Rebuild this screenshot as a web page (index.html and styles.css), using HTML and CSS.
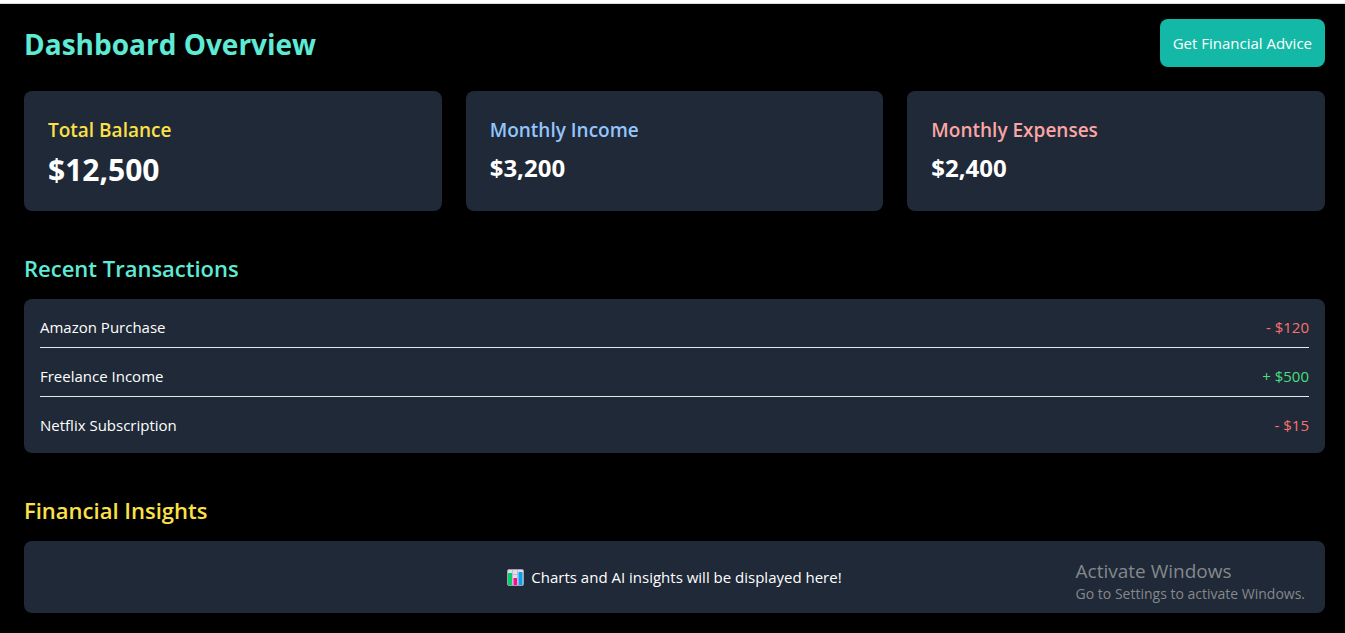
FILE: index.html
```html
<!DOCTYPE html>
<html lang="en">
<head>
  <meta charset="utf-8">
  <meta name="viewport" content="width=device-width, initial-scale=1">
  <title>Dashboard Overview</title>
  <link rel="stylesheet" href="styles.css">
</head>
<body>
  <main class="dashboard">
    <header class="dashboard-header">
      <h1 class="page-title">Dashboard Overview</h1>
      <button class="advice-button" type="button">Get Financial Advice</button>
    </header>

    <section class="summary" aria-label="Summary">
      <article class="card">
        <h2 class="card-title yellow">Total Balance</h2>
        <p class="amount amount-large">$12,500</p>
      </article>
      <article class="card">
        <h2 class="card-title blue">Monthly Income</h2>
        <p class="amount">$3,200</p>
      </article>
      <article class="card">
        <h2 class="card-title red">Monthly Expenses</h2>
        <p class="amount">$2,400</p>
      </article>
    </section>

    <section class="section">
      <h2 class="section-title teal">Recent Transactions</h2>
      <ul class="transactions">
        <li class="transaction"><span>Amazon Purchase</span><span class="debit">- $120</span></li>
        <li class="transaction"><span>Freelance Income</span><span class="credit">+ $500</span></li>
        <li class="transaction"><span>Netflix Subscription</span><span class="debit">- $15</span></li>
      </ul>
    </section>

    <section class="section">
      <h2 class="section-title yellow">Financial Insights</h2>
      <div class="insights">
        <svg class="chart-icon" viewBox="0 0 17 17" aria-hidden="true">
          <rect x="0.5" y="0.5" width="16" height="16" rx="1.5" fill="#e3dcec" stroke="#a79bb5"/>
          <path d="M1 5.5h15M1 10.5h15M5.5 1v15M10.5 1v15" stroke="#c3b7cf" fill="none"/>
          <path d="M1 4h4v12H1z" fill="#00cf63"/>
          <path d="M6.5 9h3.5v7H6.5z" fill="#f70a8d"/>
          <path d="M11.5 3h4v13h-4z" fill="#00a6ed"/>
        </svg>
        <p class="insights-text">Charts and AI insights will be displayed here!</p>
      </div>
    </section>
  </main>

  <aside class="watermark">
    <p class="watermark-title">Activate Windows</p>
    <p class="watermark-text">Go to Settings to activate Windows.</p>
  </aside>
</body>
</html>
```
FILE: styles.css
```css
*,
*::before,
*::after {
  box-sizing: border-box;
}

body {
  position: relative;
  min-height: 100vh;
  margin: 0;
  border-top: 3px solid #fff;
  background: #000;
  color: #fff;
  font-family: "Segoe UI", "Open Sans", "Noto Sans", sans-serif;
  font-size: 15px;
  line-height: 24px;
}

h1,
h2,
p,
ul {
  margin: 0;
  padding: 0;
}

.dashboard {
  padding: 15px 20px 20px 24px;
  border-top: 1px solid #d9d9d9;
}

.dashboard-header {
  display: flex;
  align-items: center;
  justify-content: space-between;
  margin-bottom: 24px;
}

.page-title {
  padding-top: 2px;
  color: #5eead4;
  font-size: 28px;
  font-weight: 700;
  line-height: 36px;
}

.advice-button {
  padding: 12px 13px;
  border: 0;
  border-radius: 8px;
  background: #14b8a6;
  color: #fff;
  font: inherit;
  cursor: pointer;
}

.summary {
  display: grid;
  grid-template-columns: repeat(3, 1fr);
  gap: 24px;
}

.card {
  padding: 25px 24px 23px;
  border-radius: 8px;
  background: #1f2937;
}

.card-title {
  margin-bottom: 8px;
  font-size: 19px;
  font-weight: 600;
  line-height: 28px;
}

.amount {
  font-size: 24px;
  font-weight: 700;
  line-height: 32px;
}

.amount-large {
  font-size: 30px;
  line-height: 36px;
}

.section {
  margin-top: 41px;
}

.section-title {
  margin-bottom: 15px;
  font-size: 22px;
  font-weight: 600;
  line-height: 32px;
}

.transactions {
  display: grid;
  gap: 16px;
  padding: 16px;
  border-radius: 8px;
  background: #1f2937;
  list-style: none;
}

.transaction {
  display: flex;
  justify-content: space-between;
}

.transaction:not(:last-child) {
  padding-bottom: 8px;
  border-bottom: 1px solid #e5e7eb;
}

.insights {
  display: flex;
  align-items: center;
  justify-content: center;
  gap: 7px;
  padding: 24px;
  border-radius: 8px;
  background: #1f2937;
}

.chart-icon {
  width: 17px;
  height: 17px;
}

.teal {
  color: #5eead4;
}

.yellow {
  color: #fde047;
}

.blue {
  color: #93c5fd;
}

.red {
  color: #fca5a5;
}

.debit {
  color: #f87171;
}

.credit {
  color: #4ade80;
}

.watermark {
  position: absolute;
  right: 40px;
  bottom: 29px;
  color: #85888c;
  pointer-events: none;
}

.watermark-title {
  font-size: 19px;
  line-height: 26px;
}

.watermark-text {
  font-size: 14px;
  line-height: 20px;
}
```
